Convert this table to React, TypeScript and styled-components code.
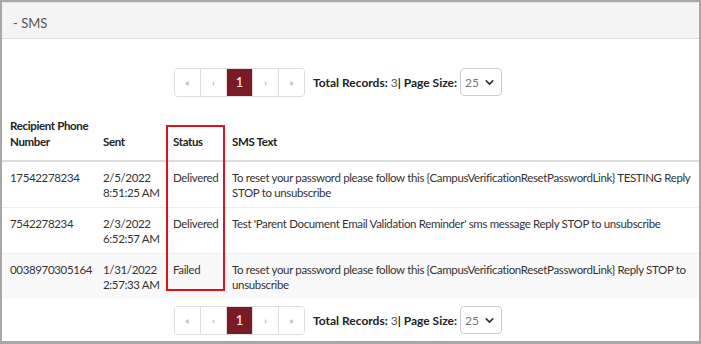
import React from 'react';
import styled, { createGlobalStyle } from 'styled-components';
import { ChevronDown } from 'lucide-react';

interface ISmsRecord {
    phone: string;
    date: string;
    time: string;
    status: string;
    text: string;
}

const records: ISmsRecord[] = [
    {
        phone: '17542278234',
        date: '2/5/2022',
        time: '8:51:25 AM',
        status: 'Delivered',
        text: 'To reset your password please follow this {CampusVerificationResetPasswordLink} TESTING Reply STOP to unsubscribe',
    },
    {
        phone: '7542278234',
        date: '2/3/2022',
        time: '6:52:57 AM',
        status: 'Delivered',
        text: "Test 'Parent Document Email Validation Reminder' sms message Reply STOP to unsubscribe",
    },
    {
        phone: '0038970305164',
        date: '1/31/2022',
        time: '2:57:33 AM',
        status: 'Failed',
        text: 'To reset your password please follow this {CampusVerificationResetPasswordLink} Reply STOP to unsubscribe',
    },
];

const Pager = ({ top }: { top: number }) => (
    <PagerRow $top={top}>
        <PageList>
            <PageItem>«</PageItem>
            <PageItem>‹</PageItem>
            <PageItem $active>1</PageItem>
            <PageItem>›</PageItem>
            <PageItem>»</PageItem>
        </PageList>
        <Totals>
            Total Records: <Count>3</Count>| Page Size:
        </Totals>
        <SizeSelect>
            <span>25</span>
            <ChevronDown size={13} strokeWidth={3} color="#333" />
        </SizeSelect>
    </PagerRow>
);

export default function App() {
    return (
        <>
            <GlobalStyle />
            <Frame>
                <PanelHeading>- SMS</PanelHeading>
                <Pager top={29} />
                <TableWrap>
                    <Table>
                        <colgroup>
                            <col style={{ width: 93 }} />
                            <col style={{ width: 70 }} />
                            <col style={{ width: 59 }} />
                            <col />
                        </colgroup>
                        <thead>
                            <tr>
                                <Th>Recipient Phone Number</Th>
                                <Th>Sent</Th>
                                <Th>Status</Th>
                                <Th>SMS Text</Th>
                            </tr>
                        </thead>
                        <tbody>
                            {records.map((r, i) => (
                                <Row key={r.phone} $shaded={i === 2}>
                                    <Td>{r.phone}</Td>
                                    <Td>
                                        {r.date}
                                        <br />
                                        {r.time}
                                    </Td>
                                    <Td>{r.status}</Td>
                                    <Td>{r.text}</Td>
                                </Row>
                            ))}
                        </tbody>
                    </Table>
                    <Highlight />
                </TableWrap>
                <Pager top={7} />
            </Frame>
        </>
    );
}

const GlobalStyle = createGlobalStyle`
    body {
        margin: 0;
        background: #ffffff;
        font-family: 'Lato', 'Liberation Sans', sans-serif;
        color: #333333;
    }
`;

const Frame = styled.div`
    width: 701px;
    height: 344px;
    box-sizing: border-box;
    border: 2px solid #a8a8a8;
    border-bottom-width: 3px;
    background: #ffffff;
    overflow: hidden;
`;

const PanelHeading = styled.div`
    height: 37px;
    box-sizing: border-box;
    display: flex;
    align-items: center;
    padding: 4px 0 0 11px;
    background: #f4f4f4;
    border-top: 1px solid #e6e6e6;
    border-bottom: 1px solid #dddddd;
    font-size: 13px;
    color: #555555;
`;

const PagerRow = styled.div<{ $top: number }>`
    display: flex;
    align-items: center;
    margin-top: ${(p) => p.$top}px;
    padding-left: 172px;
    height: 28px;
`;

const PageList = styled.div`
    display: flex;
    height: 27px;
    border: 1px solid #dddddd;
    border-radius: 4px;
    overflow: hidden;
`;

const PageItem = styled.div<{ $active?: boolean }>`
    width: 25px;
    display: flex;
    align-items: center;
    justify-content: center;
    font-size: ${(p) => (p.$active ? '13px' : '10px')};
    color: ${(p) => (p.$active ? '#ffffff' : '#9a9a9a')};
    background: ${(p) => (p.$active ? '#7a1a25' : '#ffffff')};
    & + & {
        border-left: 1px solid #dddddd;
    }
`;

const Totals = styled.div`
    margin-left: 8px;
    font-size: 12px;
    font-weight: 700;
    color: #222222;
    white-space: pre;
`;

const Count = styled.span`
    font-weight: 400;
    color: #555555;
`;

const SizeSelect = styled.div`
    margin-left: 3px;
    width: 42px;
    height: 28px;
    box-sizing: border-box;
    display: flex;
    align-items: center;
    justify-content: space-between;
    padding: 0 5px 0 4px;
    border: 1px solid #cccccc;
    border-radius: 4px;
    font-size: 12px;
    color: #777777;
`;

const TableWrap = styled.div`
    position: relative;
    margin-top: 14px;
`;

const Table = styled.table`
    width: 100%;
    border-collapse: collapse;
    table-layout: fixed;
    font-size: 11.5px;
    letter-spacing: -0.35px;
    line-height: 15px;
`;

const Th = styled.th`
    text-align: left;
    vertical-align: bottom;
    padding: 8px 2px 10px 8px;
    font-weight: 700;
    color: #222222;
    line-height: 16px;
    border-bottom: 2px solid #dddddd;
`;

const Row = styled.tr<{ $shaded: boolean }>`
    background: ${(p) => (p.$shaded ? '#f9f9f9' : '#ffffff')};
    & + & {
        border-top: 1px solid #eeeeee;
    }
`;

const Td = styled.td`
    vertical-align: top;
    padding: 8px 2px 7px 8px;
`;

const Highlight = styled.div`
    position: absolute;
    left: 164px;
    top: 15px;
    width: 59px;
    height: 166px;
    box-sizing: border-box;
    border: 2px solid #e3101a;
    pointer-events: none;
`;
